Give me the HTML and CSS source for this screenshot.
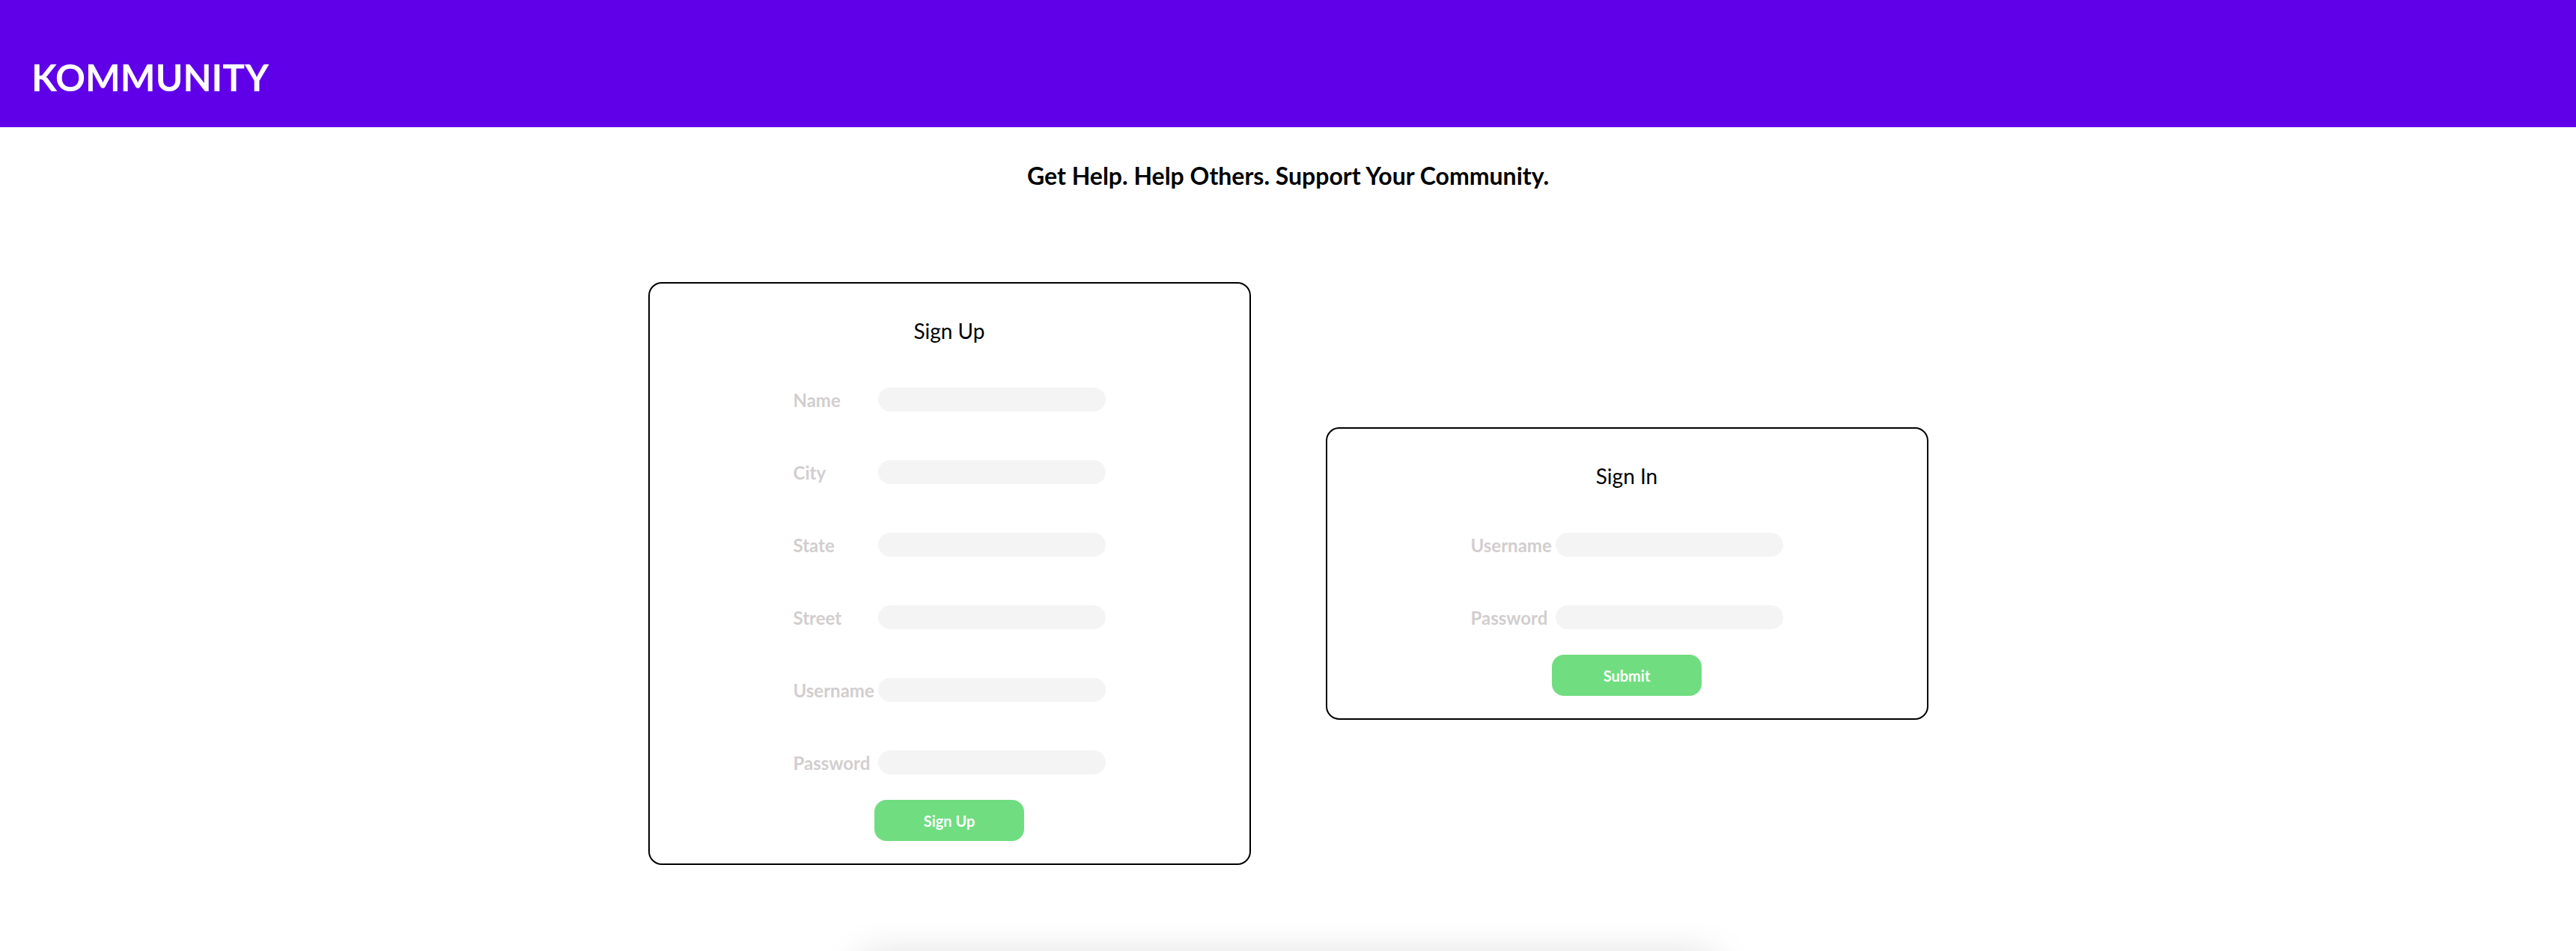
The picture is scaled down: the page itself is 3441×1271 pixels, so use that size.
FILE: index.html
```html
<!DOCTYPE html>
<html lang="en">
<head>
    <meta charset="UTF-8">
    <meta name="viewport" content="width=device-width, initial-scale=1.0">
    <title>Kommunity</title>
    <link rel="stylesheet" href="styles.css">
</head>
<body>
    <header class="top-bar">
        <h1 class="logo">KOMMUNITY</h1>
    </header>

    <h2 class="tagline">Get Help. Help Others. Support Your Community.</h2>

    <div class="forms">
        <form class="form-card" onsubmit="return false">
            <h3>Sign Up</h3>
            <div class="fields">
                <div class="field">
                    <label for="su-name">Name</label>
                    <input type="text" id="su-name">
                </div>
                <div class="field">
                    <label for="su-city">City</label>
                    <input type="text" id="su-city">
                </div>
                <div class="field">
                    <label for="su-state">State</label>
                    <input type="text" id="su-state">
                </div>
                <div class="field">
                    <label for="su-street">Street</label>
                    <input type="text" id="su-street">
                </div>
                <div class="field">
                    <label for="su-user">Username</label>
                    <input type="text" id="su-user">
                </div>
                <div class="field">
                    <label for="su-pass">Password</label>
                    <input type="password" id="su-pass">
                </div>
            </div>
            <button type="submit">Sign Up</button>
        </form>

        <form class="form-card" onsubmit="return false">
            <h3>Sign In</h3>
            <div class="fields">
                <div class="field">
                    <label for="si-user">Username</label>
                    <input type="text" id="si-user">
                </div>
                <div class="field">
                    <label for="si-pass">Password</label>
                    <input type="password" id="si-pass">
                </div>
            </div>
            <button type="submit">Submit</button>
        </form>
    </div>

    <div class="feed"></div>
</body>
</html>
```

FILE: styles.css
```css
html {
    scrollbar-width: none;
}
body {
    margin: 0;
    font-family: Lato, "Open Sans", Arial, sans-serif;
    color: #000;
    background: #fff;
}
.top-bar {
    height: 170px;
    box-sizing: border-box;
    padding: 36px 42px 0;
    display: flex;
    align-items: center;
    background-color: #6000e9;
}
.logo {
    margin: 0;
    font-size: 49.5px;
    line-height: 52px;
    font-weight: 700;
    color: #fff;
}
.tagline {
    margin: 47px 0 0;
    text-align: center;
    font-size: 32px;
    line-height: 36px;
    font-weight: 700;
}
.forms {
    display: flex;
    justify-content: center;
    align-items: center;
    gap: 100px;
    margin: 124px 0;
}
.form-card {
    width: 805px;
    box-sizing: border-box;
    border: 2px solid #000;
    border-radius: 18px;
    padding: 46px 0 30px;
    display: flex;
    flex-direction: column;
    align-items: center;
}
.form-card h3 {
    margin: 0 0 59px;
    font-size: 28px;
    font-weight: 400;
}
.fields {
    display: flex;
    flex-direction: column;
    gap: 65px;
    margin-bottom: 34px;
}
.field {
    display: flex;
    align-items: center;
}
.field label {
    width: 113px;
    font-size: 24px;
    font-weight: 700;
    color: #d2cece;
    white-space: nowrap;
}
.field input {
    width: 304px;
    height: 32px;
    box-sizing: border-box;
    border: none;
    border-radius: 16px;
    background-color: #f4f4f4;
    padding: 0 14px;
    font-family: inherit;
    font-size: 18px;
    outline: none;
}
button {
    width: 200px;
    height: 55px;
    border: none;
    border-radius: 16px;
    background-color: #70dd80;
    color: #fff;
    font-family: inherit;
    font-size: 20px;
    font-weight: 700;
    cursor: pointer;
}
button:hover {
    background-color: #62d173;
}
.feed {
    width: 1140px;
    height: 400px;
    margin: 0 auto;
    background: #fff;
    box-shadow: 0 0 50px rgba(0, 0, 0, 0.16);
}
```
